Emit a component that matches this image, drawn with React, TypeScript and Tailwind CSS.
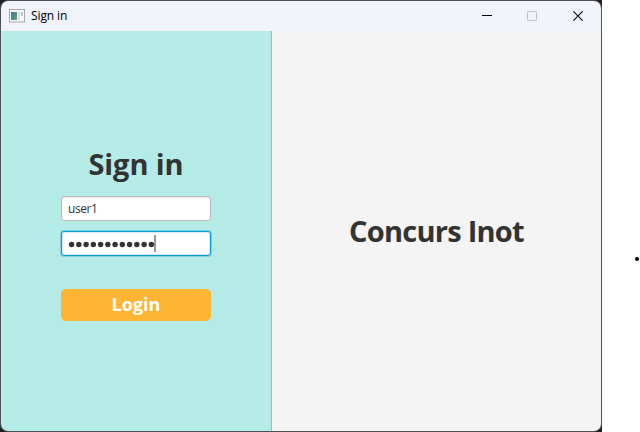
function TitleBar() {
  return (
    <header className="flex h-[30px] shrink-0 items-center bg-[#f0f3fa]">
      <svg className="ml-2 block" width="16" height="14" viewBox="0 0 16 14">
        <defs>
          <linearGradient id="pane" x1="0" y1="0" x2="1" y2="1">
            <stop offset="0" stopColor="#4b72a0" />
            <stop offset="1" stopColor="#55a777" />
          </linearGradient>
        </defs>
        <rect x="0.5" y="0.5" width="15" height="12.5" fill="#f6f6f6" stroke="#a7a9ad" />
        <rect x="2" y="3" width="6" height="8" fill="url(#pane)" />
        <rect x="9" y="3" width="2" height="8" fill="#dcdfe4" />
        <rect x="12" y="3" width="2" height="4" fill="#b6cfc3" />
      </svg>
      <span className="ml-[6px] text-[12px] leading-4 tracking-[-0.1px] text-black">Sign in</span>
      <div className="ml-auto flex items-center">
        <button className="grid h-[30px] w-[44px] place-items-center" aria-label="Minimize">
          <svg width="10" height="10"><path d="M0 4.5H10" stroke="#000" /></svg>
        </button>
        <button className="grid h-[30px] w-[46px] place-items-center" aria-label="Maximize">
          <svg width="10" height="10"><rect x="0.5" y="0.5" width="9" height="9" rx="0.7" fill="none" stroke="#c1c3c8" /></svg>
        </button>
        <button className="grid h-[30px] w-[46px] place-items-center" aria-label="Close">
          <svg width="10" height="10"><path d="M0.3 0.3L9.7 9.7M9.7 0.3L0.3 9.7" stroke="#111" strokeWidth="1.2" /></svg>
        </button>
      </div>
    </header>
  );
}

export default function App() {
  return (
    <div className="flex h-[432px] w-[640px] overflow-hidden bg-white font-['Open_Sans','Noto_Sans',sans-serif]">
      <div className="h-[432px] w-[602px] shrink-0 bg-[#202024]">
        <div className="flex h-full flex-col overflow-hidden rounded-[8px] border border-[#505054]">
          <TitleBar />
          <main className="flex min-h-0 flex-1">
            <section className="flex w-[271px] flex-col items-center border-r border-[#7acbc2] bg-[#b4ebe6] pt-[112px]">
              <h1 className="h-[53px] whitespace-nowrap text-[29px] font-bold leading-[42px] tracking-[-0.1px] text-[#333]">Sign in</h1>
              <div className="flex h-[25px] w-[150px] items-center rounded-[3px] border border-[#bababa] bg-white px-[6px] text-[12px] tracking-[-0.45px] text-[#333] shadow-[inset_0_1px_2px_#e5e5e5]">
                user1
              </div>
              <div className="mt-[10px] flex h-[25px] w-[150px] items-center rounded-[3px] border border-[#039ed3] bg-white pl-[6px] shadow-[0_0_0_1px_#80cfdd,inset_0_0_0_1px_#d5edf7]">
                <svg className="block" width="87" height="17" aria-label="Password">
                  {Array.from({ length: 12 }, (_, i) => (
                    <circle key={i} cx={3.6 + i * 7.25} cy="9.5" r="2.7" fill="#333" />
                  ))}
                </svg>
                <span className="-ml-px h-[17px] w-[2px] bg-[#999]" />
              </div>
              <button className="mt-[33px] h-8 w-[150px] rounded-[5px] bg-[#ffb534] pb-px text-[18px] font-bold leading-[31px] text-white">
                Login
              </button>
            </section>
            <section className="flex flex-1 justify-center bg-[#f4f4f4] pt-[179px]">
              <h2 className="whitespace-nowrap text-[29px] font-bold leading-[42px] tracking-[-0.75px] text-[#333]">Concurs Inot</h2>
            </section>
          </main>
        </div>
      </div>
      <div className="flex flex-1 justify-end pt-[257px]">
        <span className="mr-[1px] h-1 w-1 rounded-full bg-black" />
      </div>
    </div>
  );
}
